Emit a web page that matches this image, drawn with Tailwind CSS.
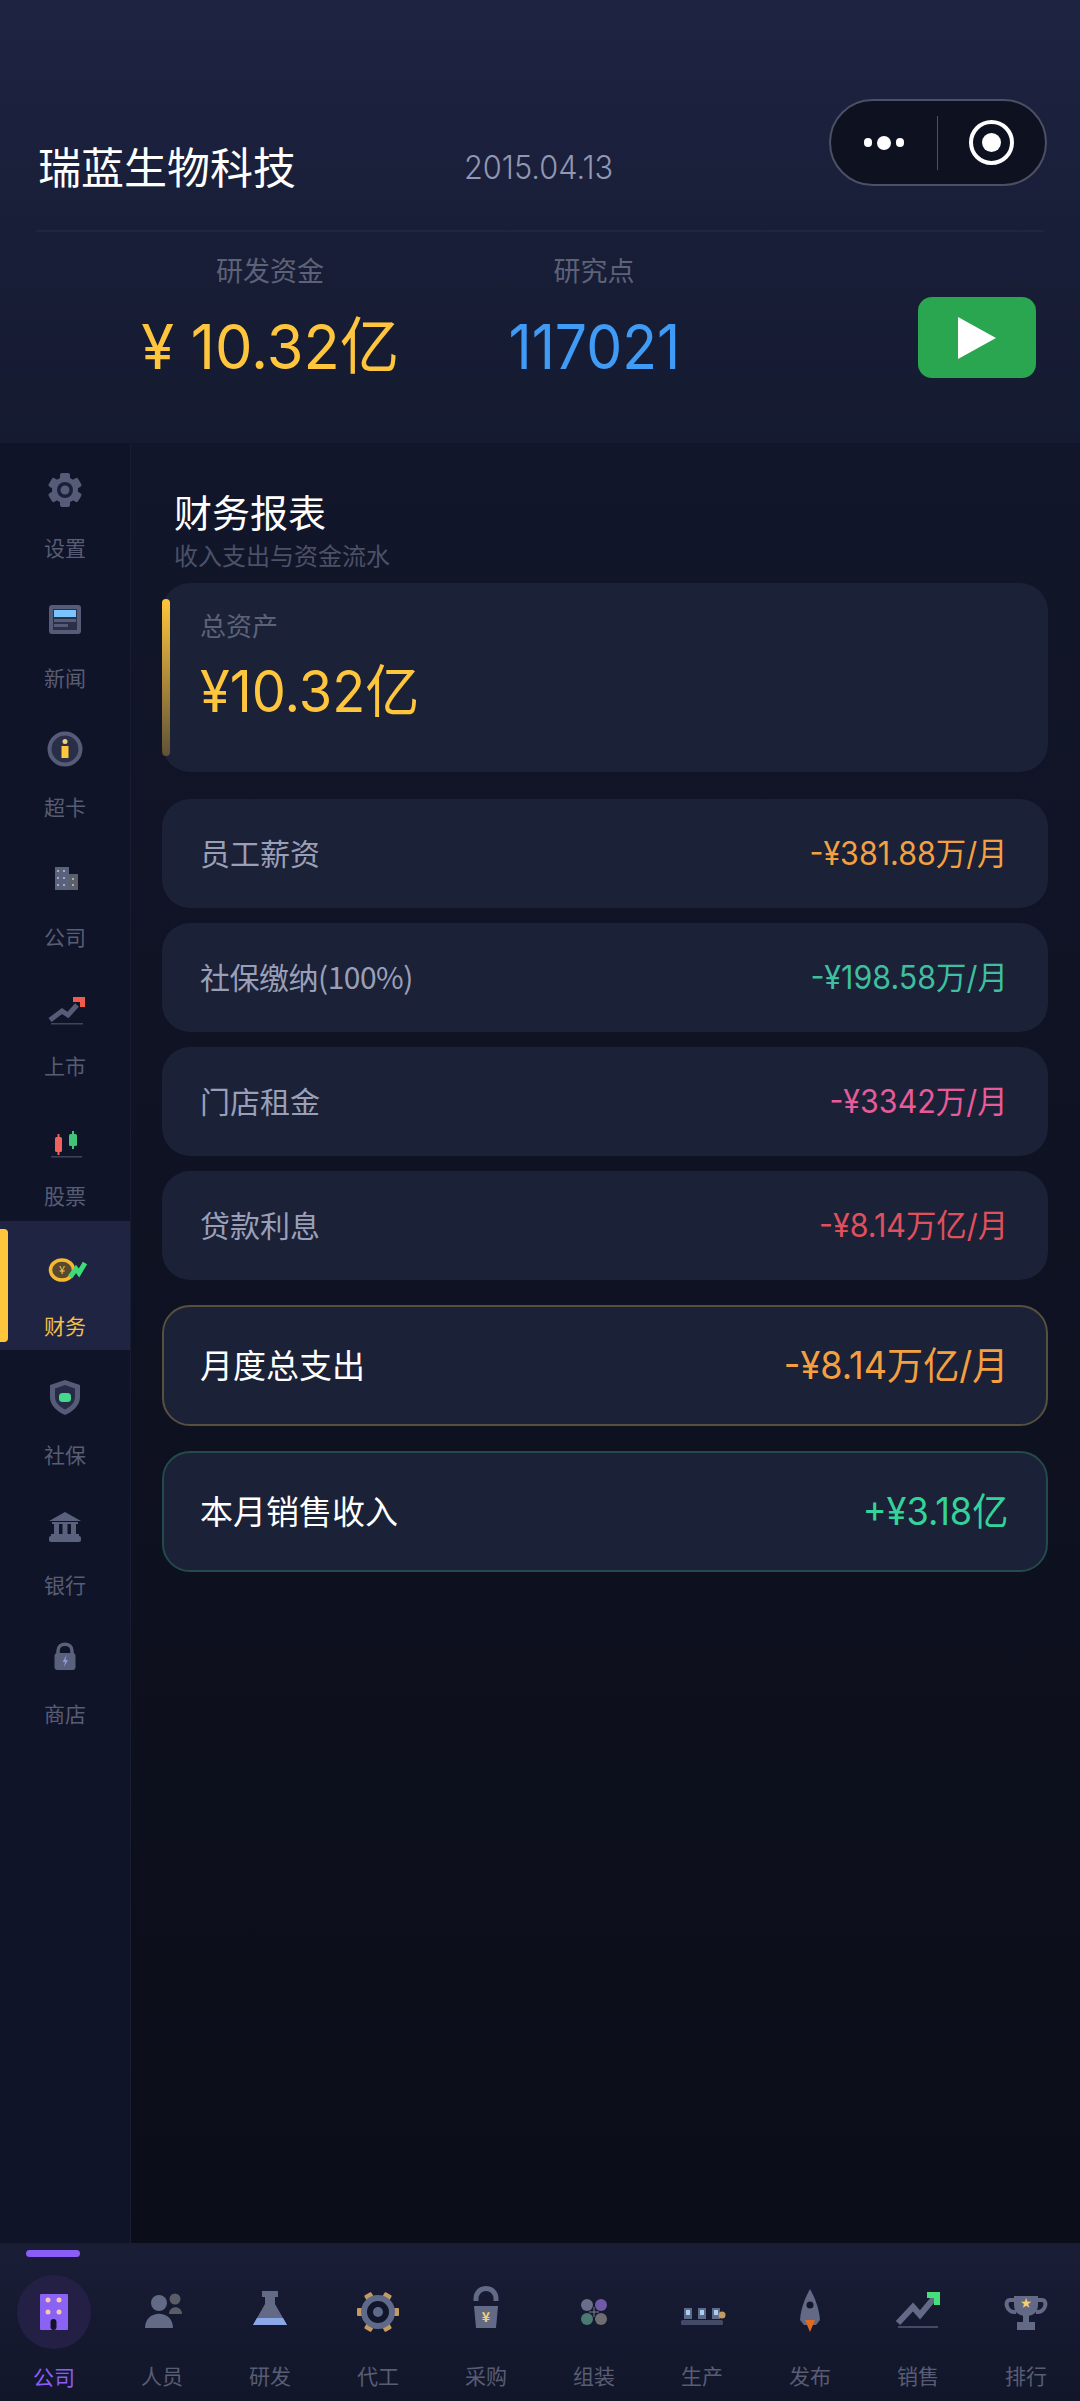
<!DOCTYPE html>
<html lang="zh-CN">
<head>
    <meta charset="UTF-8">
    <meta name="viewport" content="width=device-width, initial-scale=1.0">
    <title>财务报表</title>
    <script src="https://cdn.jsdelivr.net/npm/@tailwindcss/browser@4"></script>
</head>
<body class="bg-[#0c0e1a] font-['Noto_Sans_CJK_SC','Noto_Sans',sans-serif]">
<div class="relative w-[1080px] h-[2401px] flex flex-col overflow-hidden">

    <!-- header -->
    <header class="h-[443px] shrink-0 bg-gradient-to-b from-[#1e2342] to-[#141a2f]">
        <div class="h-[232px] mx-[36px] border-b-2 border-white/[0.03] flex items-end pb-[35px]">
            <h1 class="w-[428px] pl-[2px] text-[43px] leading-[60px] text-white">瑞蓝生物科技</h1>
            <span class="mb-[-3px] origin-left scale-x-[0.96] font-['Inter','Noto_Sans_CJK_SC',sans-serif] font-light text-[32px] leading-[60px] text-[#9297b2]">2015.04.13</span>
        </div>
        <div class="flex pl-[108px] pr-[44px] pt-[20px]">
            <div class="w-[324px] flex flex-col items-center">
                <span class="text-[27px] leading-[36px] text-[#5d6278]">研发资金</span>
                <span class="mt-[19px] scale-x-[0.96] font-['Inter','Noto_Sans_CJK_SC',sans-serif] text-[62px] leading-[80px] whitespace-nowrap text-[#ffc53d]">¥ 10.32亿</span>
            </div>
            <div class="w-[324px] flex flex-col items-center">
                <span class="text-[27px] leading-[36px] text-[#5d6278]">研究点</span>
                <span class="mt-[19px] scale-x-[0.92] font-['Inter','Noto_Sans_CJK_SC',sans-serif] text-[62px] leading-[80px] text-[#3f9bf5]">117021</span>
            </div>
            <div class="ml-auto mt-[45px] w-[118px] h-[81px] rounded-[14px] bg-[#2aa650] flex items-center justify-center">
                <svg width="40" height="44" viewBox="0 0 40 44"><path d="M1 1 L39 22 L1 43 Z" fill="#fff"/></svg>
            </div>
        </div>
    </header>

    <div class="flex-1 flex min-h-0">
        <!-- side menu -->
        <aside class="w-[131px] shrink-0 bg-[#0f1429] border-r border-white/[0.04] flex flex-col">
            <div class="h-[129.6px] pt-[19px] flex flex-col items-center">
                <svg width="56" height="56" viewBox="0 0 56 56" fill="#565c78">
                    <rect x="23" y="11" width="10" height="34" rx="2"/>
                    <rect x="23" y="11" width="10" height="34" rx="2" transform="rotate(60 28 28)"/>
                    <rect x="23" y="11" width="10" height="34" rx="2" transform="rotate(120 28 28)"/>
                    <circle cx="28" cy="28" r="13"/>
                    <circle cx="28" cy="28" r="8" fill="#1a2038"/>
                    <circle cx="28" cy="28" r="4.5" fill="#565c78"/>
                </svg>
                <span class="mt-[14px] text-[21px] leading-[30px] text-[#585d74]">设置</span>
            </div>
            <div class="h-[129.6px] pt-[19px] flex flex-col items-center">
                <svg width="56" height="56" viewBox="0 0 56 56">
                    <rect x="12" y="13" width="32" height="29" rx="3" fill="#565c78"/>
                    <rect x="16" y="17" width="24" height="21" fill="#2a3048"/>
                    <rect x="17" y="18" width="22" height="7" fill="#7cc4ff"/>
                    <rect x="17" y="27" width="22" height="3" fill="#565c78"/>
                    <rect x="17" y="32" width="14" height="3" fill="#565c78"/>
                </svg>
                <span class="mt-[14px] text-[21px] leading-[30px] text-[#585d74]">新闻</span>
            </div>
            <div class="h-[129.6px] pt-[19px] flex flex-col items-center">
                <svg width="56" height="56" viewBox="0 0 56 56">
                    <circle cx="28" cy="28" r="15.5" fill="#2a2f48" stroke="#565c78" stroke-width="4"/>
                    <circle cx="28" cy="20.500" r="2.500" fill="#f0d080"/>
                    <rect x="24.500" y="25" width="7" height="12" fill="#ffc53d"/>
                </svg>
                <span class="mt-[14px] text-[21px] leading-[30px] text-[#585d74]">超卡</span>
            </div>
            <div class="h-[129.6px] pt-[19px] flex flex-col items-center">
                <svg width="56" height="56" viewBox="0 0 56 56">
                    <rect x="18" y="16" width="14" height="23" fill="#5a617c"/>
                    <rect x="32" y="23" width="9" height="16" fill="#5c5e68"/>
                    <g fill="#a5aabd"><rect x="20" y="19" width="2" height="2"/><rect x="26" y="19" width="2" height="2"/><rect x="20" y="26" width="2" height="2"/><rect x="26" y="26" width="2" height="2"/><rect x="20" y="33" width="2" height="2"/><rect x="26" y="33" width="2" height="2"/><rect x="35" y="27" width="2" height="2"/><rect x="35" y="33" width="2" height="2"/></g>
                </svg>
                <span class="mt-[14px] text-[21px] leading-[30px] text-[#585d74]">公司</span>
            </div>
            <div class="h-[129.6px] pt-[19px] flex flex-col items-center">
                <svg width="56" height="56" viewBox="0 0 56 56">
                    <path d="M13 40 L25 31 L31 35 L40 25" fill="none" stroke="#565c78" stroke-width="5"/>
                    <rect x="14" y="43" width="32" height="1.500" fill="#3e4460"/>
                    <path d="M36 17 H48 V27 H43 V22 H36 Z" fill="#f25a4a"/>
                </svg>
                <span class="mt-[14px] text-[21px] leading-[30px] text-[#585d74]">上市</span>
            </div>
            <div class="h-[129.6px] pt-[19px] flex flex-col items-center">
                <svg width="56" height="56" viewBox="0 0 56 56">
                    <rect x="20.500" y="24" width="2" height="21" fill="#f0625a"/>
                    <rect x="18" y="27" width="7" height="15" rx="1.500" fill="#f0625a"/>
                    <rect x="35" y="21" width="2" height="18" fill="#3fc47a"/>
                    <rect x="32" y="24" width="8" height="12" rx="1.500" fill="#3fc47a"/>
                    <rect x="14" y="46" width="31" height="1.500" fill="#3e4460"/>
                </svg>
                <span class="mt-[14px] text-[21px] leading-[30px] text-[#585d74]">股票</span>
            </div>
            <div class="relative h-[129.6px] pt-[19px] flex flex-col items-center bg-[#1e2442]">
                <div class="absolute left-0 top-[8px] w-[8px] h-[113px] rounded-r-[4px] bg-[#ffc53d]"></div>
                <svg width="56" height="56" viewBox="0 0 56 56">
                    <ellipse cx="25" cy="30" rx="11.500" ry="10" fill="#57492f" stroke="#f5b82e" stroke-width="3.500"/>
                    <text x="25" y="34" text-anchor="middle" font-size="11" fill="#f5c850">¥</text>
                    <path d="M33 37 L39 29 L42 33 L48 23" fill="none" stroke="#3ddc7a" stroke-width="5"/>
                </svg>
                <span class="mt-[14px] text-[21px] leading-[30px] text-[#f5c04a]">财务</span>
            </div>
            <div class="h-[129.6px] pt-[19px] flex flex-col items-center">
                <svg width="56" height="56" viewBox="0 0 56 56">
                    <path d="M28 11 L43 16 V28 C43 37 35 43 28 46 C21 43 13 37 13 28 V16 Z" fill="#565c78"/>
                    <path d="M28 16 L38 19.500 V28 C38 34 33 38 28 40.500 C23 38 18 34 18 28 V19.500 Z" fill="#262c46"/>
                    <rect x="22" y="24" width="12" height="9" rx="3.500" fill="#44d98c"/>
                </svg>
                <span class="mt-[14px] text-[21px] leading-[30px] text-[#585d74]">社保</span>
            </div>
            <div class="h-[129.6px] pt-[19px] flex flex-col items-center">
                <svg width="56" height="56" viewBox="0 0 56 56" fill="#5a617c">
                    <path d="M28 13 L44 22 H12 Z"/>
                    <rect x="15" y="23" width="26" height="2"/>
                    <rect x="17" y="25" width="5" height="10"/><rect x="25.500" y="25" width="5" height="10"/><rect x="34" y="25" width="5" height="10"/>
                    <rect x="14" y="35" width="28" height="2"/>
                    <rect x="12" y="37" width="32" height="6" rx="2"/>
                </svg>
                <span class="mt-[14px] text-[21px] leading-[30px] text-[#585d74]">银行</span>
            </div>
            <div class="h-[129.6px] pt-[19px] flex flex-col items-center">
                <svg width="56" height="56" viewBox="0 0 56 56">
                    <path d="M21 27 V23 C21 14 35 14 35 23 V27" fill="none" stroke="#5a617c" stroke-width="3.500"/>
                    <rect x="17.500" y="25" width="21" height="17" rx="3" fill="#5a617c"/>
                    <path d="M29.500 27 L25.500 34 H28 L27 39 L31 32 H28.500 Z" fill="#9096de"/>
                </svg>
                <span class="mt-[14px] text-[21px] leading-[30px] text-[#585d74]">商店</span>
            </div>
        </aside>

        <!-- report -->
        <main class="flex-1 pl-[31px] pr-[32px] pt-[43px] bg-gradient-to-b from-[#12162a] to-[#0b0d18]">
            <div class="pl-[12px]">
                <h2 class="text-[38px] leading-[50px] text-white">财务报表</h2>
                <p class="mt-[3px] text-[24px] leading-[32px] text-[#4c5168]">收入支出与资金流水</p>
            </div>

            <div class="relative mt-[12px] h-[189px] rounded-[28px] bg-[#1b2136] pl-[38px] pt-[25px]">
                <div class="absolute left-0 top-[16px] w-[8px] h-[157px] rounded-full bg-gradient-to-b from-[#ffc53d] to-[#ffc53d]/30"></div>
                <p class="text-[26px] leading-[34px] text-[#5d6278]">总资产</p>
                <p class="mt-[12px] origin-left scale-x-[0.95] font-['Inter','Noto_Sans_CJK_SC',sans-serif] text-[57px] leading-[76px] text-[#ffc53d]">¥10.32亿</p>
            </div>

            <div class="mt-[27px] flex flex-col gap-[15px]">
                <div class="h-[109px] rounded-[28px] bg-[#1b2136] pl-[38px] pr-[40px] flex items-center justify-between">
                    <span class="mt-[-2px] text-[30px] text-[#9a9fb8]">员工薪资</span>
                    <span class="origin-right scale-x-[0.95] font-['Inter','Noto_Sans_CJK_SC',sans-serif] text-[32px] text-[#f5a040]">-¥381.88万/月</span>
                </div>
                <div class="h-[109px] rounded-[28px] bg-[#1b2136] pl-[38px] pr-[40px] flex items-center justify-between">
                    <span class="mt-[-2px] text-[30px] tracking-[-0.5px] text-[#9a9fb8]">社保缴纳(100%)</span>
                    <span class="origin-right scale-x-[0.95] font-['Inter','Noto_Sans_CJK_SC',sans-serif] text-[32px] text-[#3fbf9f]">-¥198.58万/月</span>
                </div>
                <div class="h-[109px] rounded-[28px] bg-[#1b2136] pl-[38px] pr-[40px] flex items-center justify-between">
                    <span class="mt-[-2px] text-[30px] text-[#9a9fb8]">门店租金</span>
                    <span class="origin-right scale-x-[0.95] font-['Inter','Noto_Sans_CJK_SC',sans-serif] text-[32px] text-[#e85a9a]">-¥3342万/月</span>
                </div>
                <div class="h-[109px] rounded-[28px] bg-[#1b2136] pl-[38px] pr-[40px] flex items-center justify-between">
                    <span class="mt-[-2px] text-[30px] text-[#9a9fb8]">贷款利息</span>
                    <span class="origin-right scale-x-[0.95] font-['Inter','Noto_Sans_CJK_SC',sans-serif] text-[32px] text-[#e0505c]">-¥8.14万亿/月</span>
                </div>
            </div>

            <div class="mt-[25px] h-[121px] rounded-[28px] bg-[#1b2136] border-2 border-[#57503f] pl-[36px] pr-[38px] flex items-center justify-between">
                <span class="mt-[-2px] text-[33px] text-white">月度总支出</span>
                <span class="origin-right scale-x-[0.95] font-['Inter','Noto_Sans_CJK_SC',sans-serif] text-[38px] text-[#f5a040]">-¥8.14万亿/月</span>
            </div>
            <div class="mt-[25px] h-[121px] rounded-[28px] bg-[#1b2136] border-2 border-[#234a4c] pl-[36px] pr-[38px] flex items-center justify-between">
                <span class="mt-[-2px] text-[33px] text-white">本月销售收入</span>
                <span class="origin-right scale-x-[0.95] font-['Inter','Noto_Sans_CJK_SC',sans-serif] text-[38px] text-[#34d399]">+¥3.18亿</span>
            </div>
        </main>
    </div>

    <!-- tab bar -->
    <nav class="relative h-[158px] shrink-0 bg-gradient-to-b from-[#191d36] to-[#12162a] border-t-2 border-white/[0.03] grid grid-cols-10">
        <div class="absolute left-[26px] top-[5px] w-[54px] h-[7px] rounded-full bg-[#8b5cf6]"></div>
        <div class="flex flex-col items-center pt-[30px]">
            <div class="w-[74px] h-[74px] rounded-full bg-[#241f45] flex items-center justify-center">
                <svg width="72" height="72" viewBox="0 0 72 72">
                    <rect x="22" y="18" width="28" height="36" rx="1" fill="#8a63f5"/>
                    <g fill="#f5c8b0"><circle cx="30" cy="24" r="2.500"/><circle cx="41" cy="24" r="2.500"/><circle cx="30" cy="36" r="2.500"/><circle cx="41" cy="36" r="2.500"/></g>
                    <rect x="32.500" y="43" width="6" height="11" rx="3" fill="#15122a"/>
                </svg>
            </div>
            <span class="mt-[12px] text-[21px] leading-[30px] text-[#8b5cf6]">公司</span>
        </div>
        <div class="flex flex-col items-center pt-[31px]">
            <svg width="72" height="72" viewBox="0 0 72 72">
                <circle cx="49" cy="23" r="5.500" fill="#5a5c68"/>
                <path d="M43 38 C43 29 56 29 56 38 Z" fill="#5a5c68"/>
                <circle cx="33" cy="27" r="8" fill="#626a86"/>
                <path d="M19 52 C19 33 47 33 47 52 Z" fill="#626a86"/>
            </svg>
            <span class="mt-[12px] text-[21px] leading-[30px] text-[#585d74]">人员</span>
        </div>
        <div class="flex flex-col items-center pt-[31px]">
            <svg width="72" height="72" viewBox="0 0 72 72">
                <rect x="28" y="15" width="16" height="6" fill="#626a86"/>
                <path d="M31 21 H41 V28 L53 49 H19 L31 28 Z" fill="#626a86"/>
                <path d="M23 42 H49 L53 49 H19 Z" fill="#8aa8e8"/>
            </svg>
            <span class="mt-[12px] text-[21px] leading-[30px] text-[#585d74]">研发</span>
        </div>
        <div class="flex flex-col items-center pt-[31px]">
            <svg width="72" height="72" viewBox="0 0 72 72">
                <g fill="#c49a60">
                    <rect x="32" y="15" width="8" height="42" rx="1" transform="rotate(30 36 36)"/>
                    <rect x="32" y="15" width="8" height="42" rx="1" transform="rotate(90 36 36)"/>
                    <rect x="32" y="15" width="8" height="42" rx="1" transform="rotate(150 36 36)"/>
                </g>
                <circle cx="36" cy="36" r="14" fill="#12162a" stroke="#5f6a8a" stroke-width="6"/>
                <circle cx="36" cy="36" r="5" fill="#5f6a8a"/>
            </svg>
            <span class="mt-[12px] text-[21px] leading-[30px] text-[#585d74]">代工</span>
        </div>
        <div class="flex flex-col items-center pt-[31px]">
            <svg width="72" height="72" viewBox="0 0 72 72">
                <path d="M26 25 V23 C26 9 46 9 46 23 V25" fill="none" stroke="#626a86" stroke-width="5"/>
                <path d="M24 30 H48 L46 52 H26 Z" fill="#626a86"/>
                <text x="36" y="46" text-anchor="middle" font-size="14" font-weight="700" fill="#f5d070">¥</text>
            </svg>
            <span class="mt-[12px] text-[21px] leading-[30px] text-[#585d74]">采购</span>
        </div>
        <div class="flex flex-col items-center pt-[31px]">
            <svg width="72" height="72" viewBox="0 0 72 72">
                <circle cx="29" cy="29" r="6" fill="#6a6e8a"/>
                <circle cx="43" cy="29" r="6" fill="#6f5aa8"/>
                <circle cx="29" cy="43" r="6" fill="#4a7a70"/>
                <circle cx="43" cy="43" r="6" fill="#6e6e72"/>
                <path d="M36 31 V41 M31 36 H41" stroke="#7a7e90" stroke-width="1"/>
            </svg>
            <span class="mt-[12px] text-[21px] leading-[30px] text-[#585d74]">组装</span>
        </div>
        <div class="flex flex-col items-center pt-[31px]">
            <svg width="72" height="72" viewBox="0 0 72 72">
                <rect x="15" y="44" width="42" height="5" rx="1.500" fill="#434a66"/>
                <g fill="#5f6a8a"><rect x="18" y="32" width="8" height="11"/><rect x="32" y="32" width="8" height="11"/><rect x="46" y="32" width="8" height="11"/></g>
                <g fill="#a8d0f0"><rect x="20" y="34" width="4" height="5"/><rect x="34" y="34" width="4" height="5"/><rect x="48" y="34" width="4" height="5"/></g>
                <circle cx="56" cy="39" r="3.500" fill="#c49a60"/>
            </svg>
            <span class="mt-[12px] text-[21px] leading-[30px] text-[#585d74]">生产</span>
        </div>
        <div class="flex flex-col items-center pt-[31px]">
            <svg width="72" height="72" viewBox="0 0 72 72">
                <path d="M36 13 C41 22 45 32 46 44 L42 49 H30 L26 44 C27 32 31 22 36 13 Z" fill="#626a86"/>
                <circle cx="36" cy="29" r="3.500" fill="#12162a"/>
                <path d="M31 44 H41 L36 56 Z" fill="#e06a20"/>
            </svg>
            <span class="mt-[12px] text-[21px] leading-[30px] text-[#585d74]">发布</span>
        </div>
        <div class="flex flex-col items-center pt-[31px]">
            <svg width="72" height="72" viewBox="0 0 72 72">
                <path d="M16 47 L31 31 L38 39 L53 21" fill="none" stroke="#626a86" stroke-width="6"/>
                <rect x="16" y="50" width="40" height="2" fill="#434a66"/>
                <path d="M45 16 H58 V29 H52 V22 H45 Z" fill="#46e07a"/>
            </svg>
            <span class="mt-[12px] text-[21px] leading-[30px] text-[#585d74]">销售</span>
        </div>
        <div class="flex flex-col items-center pt-[31px]">
            <svg width="72" height="72" viewBox="0 0 72 72">
                <path d="M25 24 H20 C14 24 16 37 26 36 M47 24 H52 C58 24 56 37 46 36" fill="none" stroke="#626a86" stroke-width="4"/>
                <path d="M24 20 H48 V29 C48 37 42 40 36 40 C30 40 24 37 24 29 Z" fill="#626a86"/>
                <rect x="33" y="39" width="6" height="8" fill="#626a86"/>
                <rect x="27" y="46" width="18" height="8" fill="#626a86"/>
                <text x="36" y="31" text-anchor="middle" font-size="11" fill="#f5d070">★</text>
            </svg>
            <span class="mt-[12px] text-[21px] leading-[30px] text-[#585d74]">排行</span>
        </div>
    </nav>

    <!-- mini program capsule -->
    <div class="absolute left-[829px] top-[99px] w-[218px] h-[87px] rounded-full bg-[#0e1120] border-2 border-[#4c5064] flex items-center">
        <div class="w-[106px] flex items-center justify-center gap-[5px]">
            <span class="w-[8px] h-[9px] rounded-full bg-white"></span>
            <span class="w-[14px] h-[14px] rounded-full bg-white"></span>
            <span class="w-[8px] h-[9px] rounded-full bg-white"></span>
        </div>
        <div class="w-px h-[54px] bg-[#4c5064]"></div>
        <div class="flex-1 flex items-center justify-center">
            <div class="w-[45px] h-[45px] rounded-full border-[4px] border-white flex items-center justify-center">
                <div class="w-[19px] h-[19px] rounded-full bg-white"></div>
            </div>
        </div>
    </div>
</div>
</body>
</html>
